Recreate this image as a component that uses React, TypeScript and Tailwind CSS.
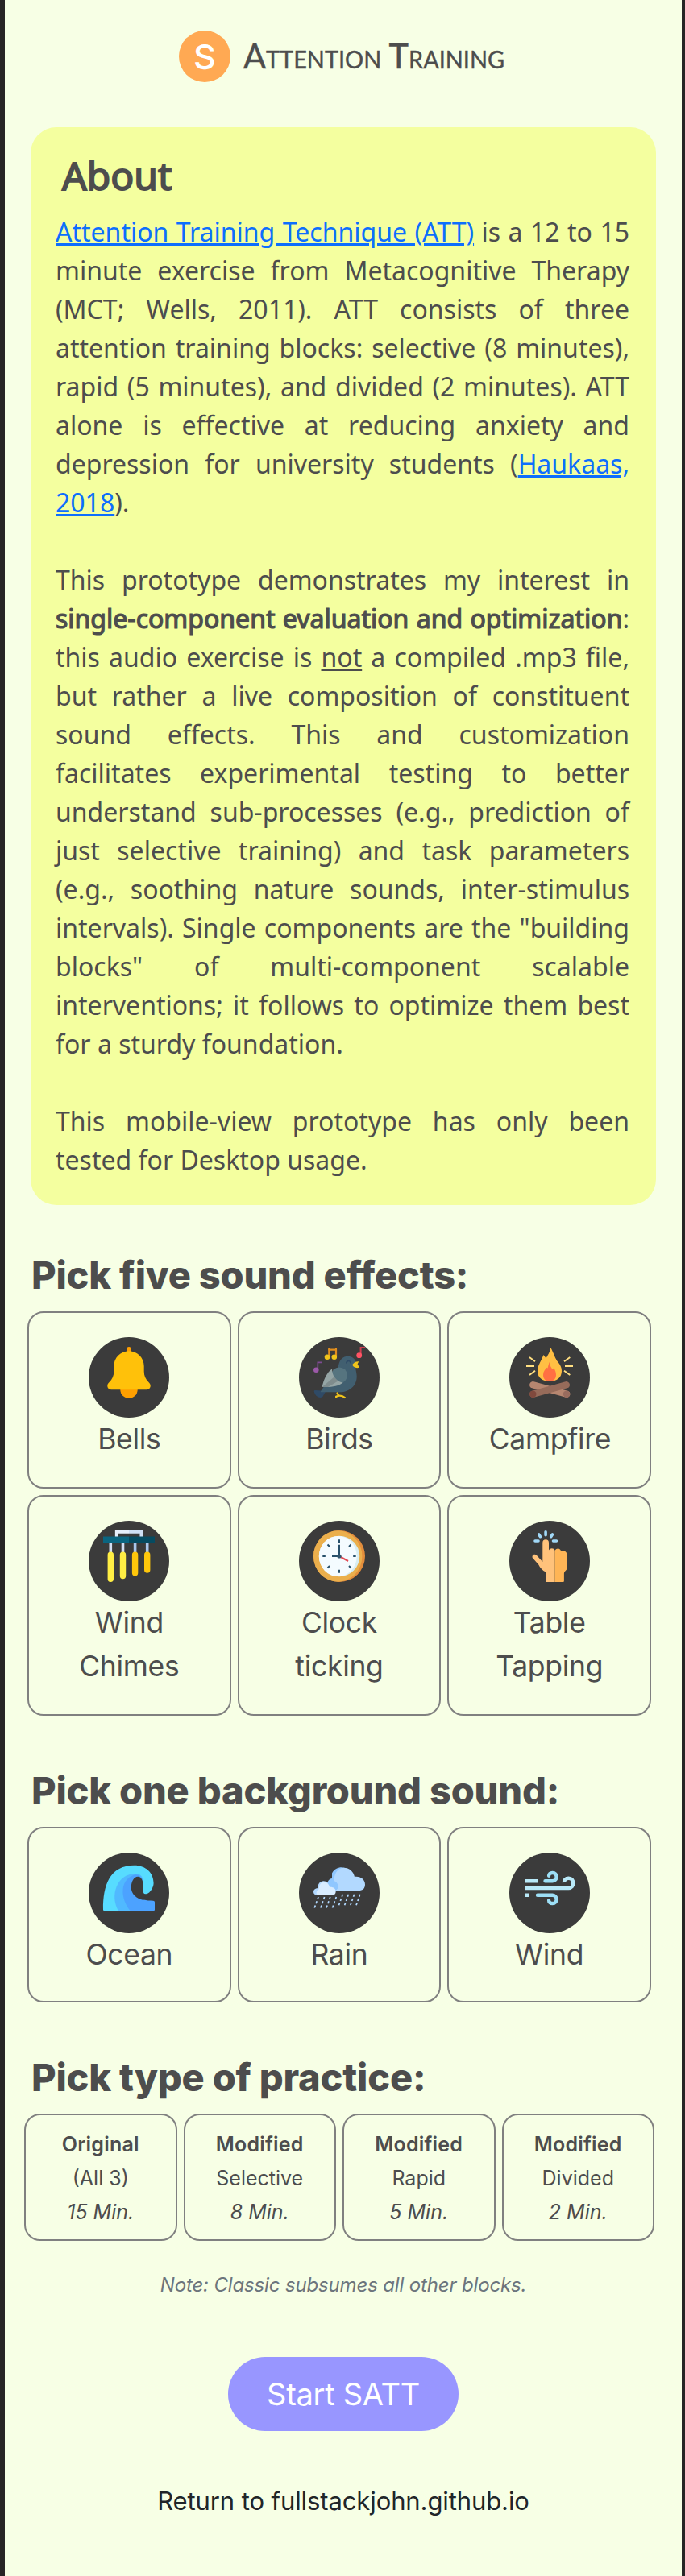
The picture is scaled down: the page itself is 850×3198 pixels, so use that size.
import type { ReactNode } from "react";

function Icon({ children }: { children: ReactNode }) {
  return (
    <div className="flex size-[100px] shrink-0 justify-center rounded-full bg-[#3b3b3b] pt-3">
      <svg viewBox="0 0 64 64" className="size-16 overflow-visible" fill="none">
        {children}
      </svg>
    </div>
  );
}

const bell = (
  <>
    <rect x="29.3" y="0" width="5.4" height="10" rx="2.7" fill="#ff9f00" />
    <path d="M21.3 52h21.4v1.3a10.7 10.7 0 0 1-21.4 0z" fill="#ff9f00" />
    <path d="M32 5.3c-10.300 0-18.700 8.300-18.700 18.700v6.500c0 5.500-2 10-6 13.700-1.300 1.200-2 2.600-2 4.400 0 2.600 2 4.700 4.700 4.700h44c2.700 0 4.700-2.100 4.700-4.700 0-1.800-.7-3.200-2-4.400-4-3.700-6-8.200-6-13.700V24c0-10.400-8.400-18.700-18.700-18.700z" fill="#ffc10a" />
  </>
);

const bird = (
  <>
    <path d="M5.300 28V19.300H10.700" stroke="#7f4a93" strokeWidth="1.700" />
    <circle cx="3.300" cy="28.700" r="3.300" fill="#9b59a8" />
    <path d="M19.300 12V3.700H28V12" stroke="#e08e1f" strokeWidth="2.200" />
    <path d="M19.300 4.500V2M28 4.500V2" stroke="#e08e1f" strokeWidth="2" />
    <circle cx="17" cy="12.700" r="3.300" fill="#f0c41b" />
    <circle cx="25.800" cy="12.700" r="3.300" fill="#f0c41b" />
    <path d="M58.600 10V1H64" stroke="#cf3f50" strokeWidth="2" />
    <circle cx="56.700" cy="10.700" r="3.400" fill="#ff5364" />
    <path d="M10.500 54.500 2 54c-1.500 0-1.600 1.200-.8 3 1.600 4.500 6 7.300 10 5.300l4-7z" fill="#2f4a66" />
    <path d="M42.700 11.700c-6.400 0-10 4.600-11.400 10.300C29.500 29 24 33 18 42L9 55.200c-.4.600 0 1.100.6 1.100H33c12 0 20.700-8.300 20.700-19.300 0-4-1-6.400-1.300-9.500-.1-1.600.9-3.500.9-5.500 0-6-4.600-10.300-10.600-10.300z" fill="#415f70" />
    <circle cx="32" cy="35.400" r="10" fill="#56747f" />
    <path d="M23 27.600C16.500 32 12.500 41 10.700 50c11 .6 20.500-1 26-5.500-9-1-13.700-9-13.700-16.900z" fill="#95a5a5" />
    <path d="M25.500 37.500 10.700 50H18l12.500-7.500z" fill="#7f8c8d" />
    <path d="M40.800 20.500c.5-4 5-4 5.500 0" stroke="#2f4a66" strokeWidth="1.700" />
    <path d="M48.200 22.300c1.500-2.600 4.700-4.300 8.200-4-1 1.500-1.600 2.400-1.700 3.600l2.400 3.700c-4 1.500-7.700 0-8.900-3.300z" fill="#f0c41b" />
    <path d="m29.300 56.500 2.200 5.300M28.200 63.500V61.800c4-2 8.500-.6 11.200 1.500" stroke="#f0c41b" strokeWidth="2.300" />
  </>
);

const campfire = (
  <>
    <path d="M33.300.7C38 10 39 15 42.500 19c3 4 4.500 6.800 4.500 11 0 8-6 13-15 13s-15-5-15-13c0-7 4.500-12 7.500-20l3 4.300C29.500 10.500 32.500 7 33.300.7z" fill="#ffbf43" />
    <path d="M31.700 18.700c1 5 2 7 4 9l1.700-1.500c1.500 3 2.600 5.500 2.600 8.500 0 5-3 8.300-8 8.300s-8-3.300-8-8.300c0-4 2.500-6.500 4-9l1.500.8z" fill="#ff7043" />
    <path d="M3 24h10M51 24h10M7 13l7 5.200M7 35l7-5.200M57.300 13l-7.300 5.200M57.300 35 50 29.800" stroke="#ffdf82" strokeWidth="2" />
    <path d="m11.300 47.300 42 11.400" stroke="#b68670" strokeWidth="8.400" strokeLinecap="round" />
    <path d="m11.300 58.700 41.500-11.400" stroke="#966b5a" strokeWidth="8.400" strokeLinecap="round" />
    <circle cx="11.300" cy="58.700" r="4.200" fill="#80493d" />
    <circle cx="53" cy="58.700" r="4.200" fill="#996c5e" />
  </>
);

const chimes = (
  <>
    <path d="M16.700 8V1.900H32" stroke="#e6effb" strokeWidth="3.700" />
    <path d="M32 1.900h15.300V8" stroke="#cfdff4" strokeWidth="3.700" />
    <path d="M0 7.500h32V15H0z" fill="#0b6580" />
    <path d="M32 7.500h32V15H32z" fill="#064b61" />
    <path d="M9.300 15v13M24.500 15v13" stroke="#d3def1" strokeWidth="3.600" />
    <path d="M39.600 15v13M54.700 15v13" stroke="#a9c6eb" strokeWidth="3.600" />
    <path d="M9.300 30.300v29.900M24.500 30.300v26.200" stroke="#ffee44" strokeWidth="7.400" strokeLinecap="round" />
    <path d="M39.600 30.300v22.500M54.700 30.300V49" stroke="#ffc70b" strokeWidth="7.400" strokeLinecap="round" />
  </>
);

const clock = (
  <>
    <circle cx="32" cy="32" r="32" fill="#e38d3c" />
    <ellipse cx="30.200" cy="32" rx="30.200" ry="31.700" fill="#ebaf4c" />
    <circle cx="32" cy="32" r="25.200" fill="#d8eef3" />
    <ellipse cx="30.300" cy="32" rx="23.500" ry="25.100" fill="#f4fbff" />
    <path d="M32 11.300v4M32 48.700v4M11.300 32h3.500M49.200 32h3.500M17.500 17.500l2.500 2.500M44 44l2.500 2.500M46.500 17.500 44 20M20 44l-2.500 2.500" stroke="#27506b" strokeWidth="2" />
    <path d="m32 32 11 6" stroke="#e24a54" strokeWidth="2" />
    <path d="M32 17.700V32h-9" stroke="#27506b" strokeWidth="2" />
    <circle cx="32" cy="32" r="2.600" fill="#31566f" />
  </>
);

const tap = (
  <>
    <path d="M27.100 1.800v4M18.700 5l1.800 2.700M35.500 5l-1.800 2.700M14 13h4M36.500 13h4" stroke="#a1d8f7" strokeWidth="3.600" strokeLinecap="round" />
    <path d="M38.500 64H28.300c-.8 0-1.300-.5-1.300-1.300V51.500c-3.600-1.600-7-5.200-8.700-9L10.800 34c-1.200-3.500 2.600-5.700 5-3.300L23.300 39V15.200a3.850 3.850 0 0 1 7.700 0v9.300c1.800-3 6-3 7.500 0z" fill="#ffc27b" />
    <path d="M38.500 25.800c.5-4.500 7.500-4.700 7.500.3 2.500-1.900 7.600-.2 7.600 4.400v16c0 3-3.700 4-3.700 7v9c0 1-.6 1.500-1.500 1.500h-9.900z" fill="#ffb556" />
  </>
);

const ocean = (
  <>
    <path d="M0 58.500C-.3 29 8 3.700 38.500 3.700 53 3.700 62.600 13 62.600 26c0 5-4.200 12-8.700 13.300-3.600.9-4.400-2-4.400-5.800V25L42 16 24 60H1.500C.5 60 0 59.500 0 58.500z" fill="#57dcff" />
    <path d="M18.700 60C8 41 17 14 40.500 14c6 0 9.700 4.500 9.500 13L35 60z" fill="#50b9ff" />
    <path d="M33.500 60C22 46 19.500 22.500 38 15.700c6.500-1.700 11.500 3 11.500 9.300-1.300-4.700-3.600-7-6.500-7-5.400 0-8.200 6.500-8.200 13.500 0 9.500 10 16.200 27.200 16.200 1.300 0 2 .8 2 2v8.800c0 1-.5 1.500-1.500 1.500z" fill="#4ca2ff" />
    <path d="M49.500 37V26c-.7-5-3-8.200-6.300-8.200-5.400 0-8.400 6.700-8.400 13.700C34.800 39 41 45 50 47l4-8c-2 1-4.500 1-4.500-2z" fill="#3b3b3b" />
  </>
);

const leftRain = [6, 13.6, 20.8, 28.3];
const rightRain = [36.3, 43.4, 50.6, 57.8];

const rain = (
  <>
    <path d="M23 13.500C27 5 37 5 41 8l-4 27H25c-10 0-10-14-2-15z" fill="#8fc7ff" />
    <path d="M26 35.300c6-2 6-8-.5-9-1-10 3.500-19.600 12-19.600 6.800 0 12 4.500 13.500 11.200 7.500-1 13 3.600 13 9.600 0 5.500-3.500 7.800-9 7.800z" fill="#b2d9ff" />
    <circle cx="24" cy="29.500" r="6.500" fill="#8fc7ff" />
    <path d="M5.500 32C4.500 25 12 20 18 25.500L15 41H5c-6.700 0-6.700-9 .5-9z" fill="#b2d9ff" />
    <path d="M7.500 41c-5 0-5-5-1-7.500.4-5 2.500-9 6.500-9 3.600 0 6.400 2.500 7 6.300 4.500-.4 7.700 1.700 7.700 5.500 0 3.200-2 4.700-5 4.700z" fill="#d8ecff" />
    {leftRain.map((x) => (
      <path key={x} d={`M${x} 43 ${x - 5} 57.300`} stroke="#b2d9ff" strokeWidth="1.700" strokeDasharray="3.200 2.400" />
    ))}
    {rightRain.map((x) => (
      <path key={x} d={`M${x} 39.700 ${x - 5} 54`} stroke="#b2d9ff" strokeWidth="1.700" strokeDasharray="3.200 2.400" />
    ))}
  </>
);

const wind = (
  <>
    <path d="M1 32h54.500c7.500 0 8-12.300 0-12.300-3.300 0-5.800 2.300-5.500 5.300" stroke="#b9e9f8" strokeWidth="4.600" />
    <path d="M1 23.300h16M1 40.700h6" stroke="#b9e9f8" strokeWidth="4.600" />
    <path d="M26.500 23.300h9c6.800-.3 6.800-10.300 0-10.300-2.500 0-4.500 1.600-4.400 3.700M17 40.700h18.500c6.800.3 6.800 10.300 0 10.300-2.500 0-4.500-1.600-4.400-3.700" stroke="#9ddff6" strokeWidth="4.400" strokeLinecap="round" />
  </>
);

function SoundCard({ label, icon }: { label: string; icon: ReactNode }) {
  return (
    <button className="flex flex-col items-center rounded-[20px] border-2 border-[#808080] px-6 pt-[30px] text-[35.5px] leading-[54px] tracking-[-0.3px]">
      <Icon>{icon}</Icon>
      <span className="w-[150px]">{label}</span>
    </button>
  );
}

function Heading({ children }: { children: ReactNode }) {
  return <h2 className="ml-[33px] text-[47px] leading-[57px] font-extrabold tracking-[-0.2px] whitespace-nowrap">{children}</h2>;
}

const practices = [
  ["Original", "(All 3)", "15 Min."],
  ["Modified", "Selective", "8 Min."],
  ["Modified", "Rapid", "5 Min."],
  ["Modified", "Divided", "2 Min."],
];

export default function App() {
  return (
    <main className="flex h-[3198px] w-[850px] flex-col border-r-4 border-l-[6px] border-[#272525] bg-[#f7ffe5] font-['Inter',sans-serif] text-[#4d4d4d]">
      <header className="flex h-[158px] shrink-0 items-start pt-[38px] pl-[216px]">
        <div className="flex size-16 items-center justify-center rounded-full bg-[#ffa953] text-[43px] leading-none font-medium text-white">S</div>
        <h1 className="ml-4 origin-left scale-x-[0.963] font-['Lato',sans-serif] text-[43px] leading-[62px] whitespace-nowrap [font-variant:small-caps] [-webkit-text-stroke:0.4px_#4d4d4d]">Attention Training</h1>
      </header>

      <section className="ml-8 h-[1338px] w-[776px] shrink-0 rounded-[32px] bg-[#f4ff9f] px-8 pt-[30px] font-['Noto_Sans',sans-serif] text-[32px] leading-[48px]">
        <h2 className="ml-[7px] text-[48px] leading-[60px] [-webkit-text-stroke:1.8px_#4d4d4d]">About</h2>
        <div className="mt-4 -ml-px w-[712px] text-justify">
          <p>
            <a className="text-[#0d6efd] underline">Attention Training Technique (ATT)</a> is a 12 to 15 minute exercise from Metacognitive Therapy (MCT; Wells, 2011). ATT consists of three attention training blocks: selective (8 minutes), rapid (5 minutes), and divided (2 minutes). ATT alone is effective at reducing anxiety and depression for university students (<a className="text-[#0d6efd] underline">Haukaas, 2018</a>).
          </p>
          <p className="mt-12">
            This prototype demonstrates my interest in <span className="[-webkit-text-stroke:1.2px_#4d4d4d]">single-component evaluation and optimization</span>: this audio exercise is <u>not</u> a compiled .mp3 file, but rather a live composition of constituent sound effects. This and customization facilitates experimental testing to better understand sub-processes (e.g., prediction of just selective training) and task parameters (e.g., soothing nature sounds, inter-stimulus intervals). Single components are the "building blocks" of multi-component scalable interventions; it follows to optimize them best for a sturdy foundation.
          </p>
          <p className="mt-12">This mobile-view prototype has only been tested for Desktop usage.</p>
        </div>
      </section>

      <section className="mt-[58px]">
        <Heading>Pick five sound effects:</Heading>
        <div className="mt-[17px] ml-7 grid w-[774px] grid-cols-3 grid-rows-[220px_274px] gap-2">
          <SoundCard label="Bells" icon={bell} />
          <SoundCard label="Birds" icon={bird} />
          <SoundCard label="Campfire" icon={campfire} />
          <SoundCard label="Wind Chimes" icon={chimes} />
          <SoundCard label="Clock ticking" icon={clock} />
          <SoundCard label="Table Tapping" icon={tap} />
        </div>
      </section>

      <section className="mt-16">
        <Heading>Pick one background sound:</Heading>
        <div className="mt-[17px] ml-7 grid w-[774px] grid-cols-3 grid-rows-[218px] gap-2">
          <SoundCard label="Ocean" icon={ocean} />
          <SoundCard label="Rain" icon={rain} />
          <SoundCard label="Wind" icon={wind} />
        </div>
      </section>

      <section className="mt-16">
        <Heading>Pick type of practice:</Heading>
        <div className="mt-[17px] ml-6 grid w-[782px] grid-cols-4 grid-rows-[158px] gap-2">
          {practices.map(([kind, block, time]) => (
            <button key={block} className="flex flex-col items-center rounded-[20px] border-2 border-[#808080] pt-[15px] text-[25px] leading-[42px]">
              <strong className="font-semibold tracking-[0.2px]">{kind}</strong>
              <span>{block}</span>
              <em>{time}</em>
            </button>
          ))}
        </div>
        <p className="mt-[34px] text-center text-[24px] leading-[42px] tracking-[-0.15px] text-[#6c757d] italic">Note: Classic subsumes all other blocks.</p>
      </section>

      <footer className="flex flex-col items-center pt-[68px]">
        <button className="h-[92px] w-[286px] rounded-full bg-[#9896ff] text-[38px] tracking-[-0.3px] text-white">Start SATT</button>
        <a className="mt-[63px] text-[31px] leading-[48px] tracking-[-0.1px] text-[#212529]">Return to fullstackjohn.github.io</a>
      </footer>
    </main>
  );
}
